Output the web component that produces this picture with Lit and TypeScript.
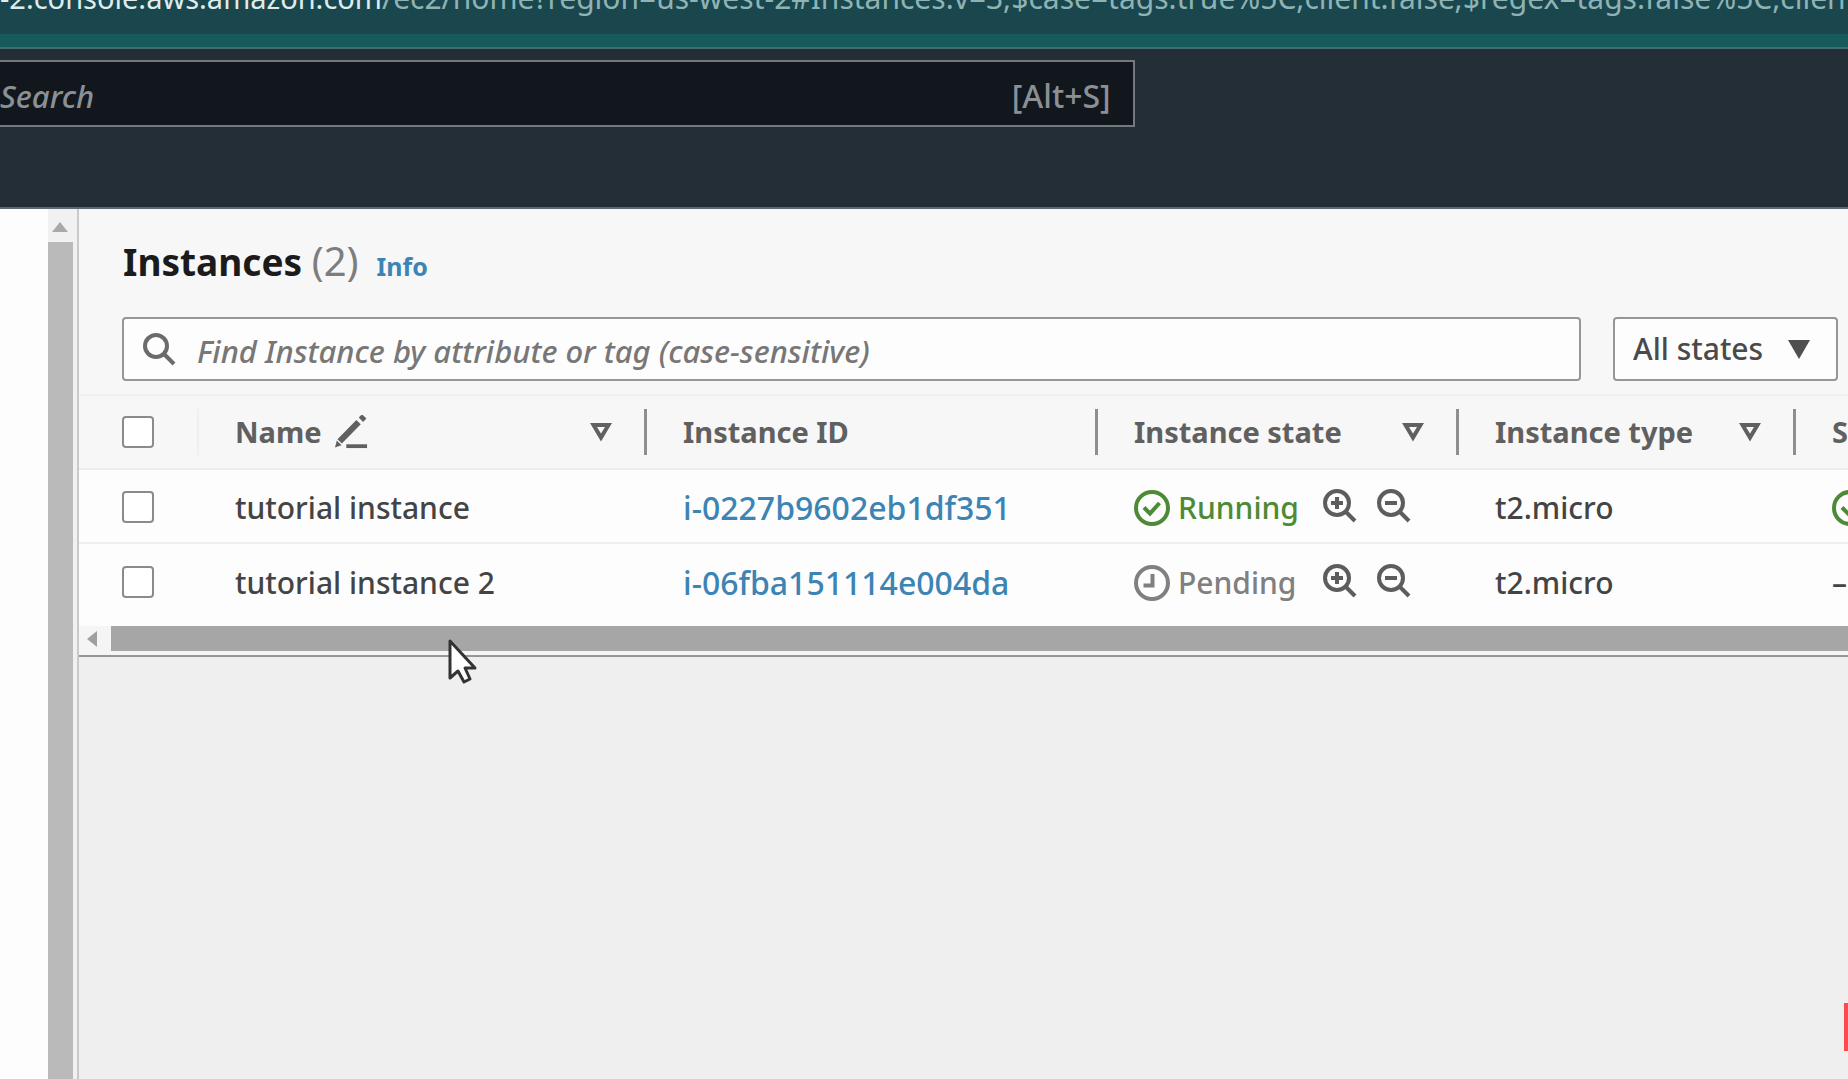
import { LitElement, html, css, svg } from "lit";
import { customElement } from "lit/decorators.js";

type Instance = { name: string; id: string; state: "Running" | "Pending"; type: string; check: boolean };

const INSTANCES: Instance[] = [
  { name: "tutorial instance", id: "i-0227b9602eb1df351", state: "Running", type: "t2.micro", check: true },
  { name: "tutorial instance 2", id: "i-06fba151114e004da", state: "Pending", type: "t2.micro", check: false },
];

const icon = (cls: string, size: number, body: unknown) => html`<svg
  class="icon ${cls}" width=${size} height=${size} viewBox="0 0 36 36" fill="none"
  stroke="currentColor" stroke-width="4" aria-hidden="true">${body}</svg>`;

const search = () => icon("lens", 36, svg`<circle cx="15" cy="15" r="11"/><path d="M23 23 L33 33"/>`);
const zoomIn = () => icon("", 36, svg`<circle cx="15" cy="15" r="12"/><path d="M24 24 L33 33"/><path d="M9 15H21M15 9V21"/>`);
const zoomOut = () => icon("", 36, svg`<circle cx="15" cy="15" r="12"/><path d="M24 24 L33 33"/><path d="M9 15H21"/>`);
const running = () => icon("", 36, svg`<circle cx="18" cy="18" r="16"/><path d="M10 17.5 L16 23.500 L25.500 13"/>`);
const pending = () => icon("", 36, svg`<circle cx="18" cy="18" r="16"/><path d="M18.500 9V20.500H9.500"/>`);
const pencil = () => icon("", 34, svg`<path d="M6 28 L26 7.500" stroke-width="6.500"/><path d="M28.500 5 L32 1.500" stroke-width="6.500"/><path d="M1 34.500 L3 27 L8 32 Z" fill="currentColor" stroke="none"/><path d="M13 33H35"/>`);
const sortMark = () => html`<svg class="icon" width="22" height="20" viewBox="0 0 22 20" fill="none"
  stroke="currentColor" stroke-width="4" aria-hidden="true"><path d="M3.500 3H18.500L11 15.500Z"/></svg>`;

@customElement("app-root")
export class AppRoot extends LitElement {
  static styles = css`
    :host {
      display: flex;
      flex-direction: column;
      min-height: 100vh;
      position: relative;
      overflow: hidden;
      background: #efefef;
      color: #444;
      font: 500 30px/36px "Noto Sans", "Open Sans", sans-serif;
    }
    * { box-sizing: border-box; }
    button, input, select { font: inherit; color: inherit; margin: 0; }
    button { background: none; border: 0; padding: 0; display: flex; }
    a { color: #3c84b4; text-decoration: none; }
    .icon { display: block; flex: none; }

    .address {
      display: flex;
      align-items: flex-end;
      height: 34px;
      padding-bottom: 18px;
      overflow: hidden;
      white-space: nowrap;
      background: #1a474d;
      color: #8fb3b5;
      font-weight: 400;
    }
    .address b { color: #dfecec; font-weight: 400; font-size: 29px; }
    .chrome-edge { height: 15px; background: #165a5e; border-bottom: 2px solid #456b72; }

    .nav { height: 160px; padding-top: 11px; background: #232e37; border-bottom: 2px solid #5f686f; }
    .nav-search {
      display: flex;
      align-items: center;
      width: 61.4%;
      height: 67px;
      padding: 4px 22px 0 0;
      background: #12171e;
      border: 2px solid #737980;
      border-left: 0;
      color: #8b9095;
      font-size: 32px;
    }
    .nav-search input { flex: 1; min-width: 0; border: 0; padding: 0; background: none; outline: 0; font-size: 31px; line-height: 44px; }
    input::placeholder { color: inherit; opacity: 1; font-style: italic; }

    .body { flex: 1; display: flex; }
    .side { width: 48px; background: #fdfdfd; }
    .vscroll {
      width: 31px;
      display: flex;
      flex-direction: column;
      background: #f1f1f1;
      border-right: 2px solid #c9c9c9;
    }
    .vscroll svg { margin: 13px 0 10px 4px; display: block; flex: none; }
    .vthumb { flex: 1; width: 25px; background: #bababa; }

    main { flex: 1; min-width: 0; }
    .panel { background: #f7f7f7; border-bottom: 2px solid #969696; }
    .title { display: flex; align-items: baseline; height: 108px; padding: 26px 44px 0; }
    h1 { margin: 0; font-size: 37px; line-height: 52px; color: #1b1b1b; font-weight: 700; }
    h1 span { font-size: 40px; font-weight: 400; color: #7d7d7d; }
    .info { margin-left: 18px; font-size: 25px; font-weight: 700; }

    .filters { display: flex; gap: 32px; padding: 0 10px 13px 43px; }
    .find, .states {
      display: flex;
      align-items: center;
      height: 64px;
      background: #fdfdfd;
      border: 2px solid #969696;
      border-radius: 4px;
    }
    .find { flex: 1; padding: 0 20px 0 17px; gap: 20px; color: #777; font-size: 31px; }
    .find input { flex: 1; min-width: 0; height: 60px; border: 0; padding: 4px 0 0; background: none; outline: 0; line-height: 44px; }
    .find .lens { color: #6b6b6b; }
    .states { position: relative; width: 225px; color: #4a4a4a; }
    .states select { width: 100%; height: 100%; padding: 0 0 0 18px; border: 0; background: none; appearance: none; outline: 0; }
    .states svg { position: absolute; right: 26px; top: 21px; pointer-events: none; }

    .scroller { overflow: hidden; border-top: 2px solid #efefef; }
    table { width: 2100px; table-layout: fixed; border-collapse: separate; border-spacing: 0; }
    .c-pick { width: 120px; }
    .c-name { width: 448px; }
    .c-id { width: 451px; }
    .c-state { width: 361px; }
    .c-type { width: 337px; }
    th, td { padding: 0 0 0 36px; text-align: left; vertical-align: middle; font-weight: inherit; white-space: nowrap; }
    th { height: 74px; border-bottom: 2px solid #ececec; color: #606060; font-weight: 700; font-size: 29px; }
    td { height: 74px; padding-top: 4px; background: #fdfdfd; border-bottom: 2px solid #efefef; }
    tr:last-child td { height: 82px; padding-bottom: 8px; border-bottom: 0; }
    td a { font-size: 32px; }
    .pick { padding-left: 43px; }
    td.pick { padding-top: 2px; }
    .head { display: flex; align-items: center; height: 46px; padding-right: 32px; border-right: 3px solid #8e8e8e; }
    .head.light { border-right: 2px solid #efefef; }
    .head .sort { margin-left: auto; }
    .head .edit { margin-left: 12px; }
    .box {
      display: block;
      appearance: none;
      width: 32px;
      height: 32px;
      background: #fff;
      border: 2px solid #8b8b8b;
      border-radius: 4px;
    }
    .state { display: flex; align-items: center; color: #808080; }
    .state .label { margin: 0 26px 0 8px; width: 118px; }
    .state.running, .ok { color: #4d8a35; }
    .state button { color: #5d5d5d; margin-right: 18px; padding-bottom: 4px; }

    .hscroll { display: flex; align-items: center; height: 29px; padding: 0 0 4px 8px; background: #f5f5f5; }
    .hthumb { flex: 1; height: 25px; margin-left: 14px; background: #a6a6a6; }

    .pointer { position: absolute; left: 447px; top: 637px; }
    .tab { position: absolute; right: 0; top: 1003px; width: 4px; height: 48px; background: #ff4a4d; }
  `;

  private heading(label: string, sortable = true, extra: unknown = "") {
    return html`<th scope="col"><div class="head"><span>${label}</span>${extra}
      ${sortable ? html`<button class="sort" aria-label="Sort by ${label}">${sortMark()}</button>` : ""}</div></th>`;
  }

  private row(i: Instance) {
    return html`<tr>
      <td class="pick"><input class="box" type="checkbox" aria-label="Select ${i.name}"></td>
      <td>${i.name}</td>
      <td><a href="#${i.id}">${i.id}</a></td>
      <td><div class="state ${i.state.toLowerCase()}">
        ${i.state === "Running" ? running() : pending()}<span class="label">${i.state}</span>
        <button aria-label="Include ${i.state}">${zoomIn()}</button>
        <button aria-label="Exclude ${i.state}">${zoomOut()}</button>
      </div></td>
      <td>${i.type}</td>
      <td>${i.check ? html`<span class="ok">${running()}</span>` : "–"}</td>
    </tr>`;
  }

  render() {
    return html`
      <div class="address"><b>-2.console.aws.amazon.com</b><span>/ec2/home?region=us-west-2#Instances:v=3;$case=tags:true%5C,client:false;$regex=tags:false%5C,client:false</span></div>
      <div class="chrome-edge"></div>
      <header class="nav">
        <label class="nav-search"><input type="search" placeholder="Search" aria-label="Search"><span>[Alt+S]</span></label>
      </header>
      <div class="body">
        <aside class="side"></aside>
        <div class="vscroll">
          <svg width="16" height="10" viewBox="0 0 16 10" fill="#a9a9a9" aria-hidden="true"><path d="M8 0L16 10H0Z"/></svg>
          <div class="vthumb"></div>
        </div>
        <main>
          <section class="panel">
            <div class="title"><h1>Instances <span>(2)</span></h1><a class="info" href="#info">Info</a></div>
            <div class="filters">
              <label class="find">${search()}<input type="text" aria-label="Find instance"
                placeholder="Find Instance by attribute or tag (case-sensitive)"></label>
              <label class="states"><select aria-label="Instance state filter"><option>All states</option></select>
                <svg width="22" height="19" viewBox="0 0 22 19" fill="#4f4f4f" aria-hidden="true"><path d="M0 0H22L11 19Z"/></svg></label>
            </div>
            <div class="scroller">
              <table>
                <colgroup><col class="c-pick"><col class="c-name"><col class="c-id"><col class="c-state"><col class="c-type"><col></colgroup>
                <thead><tr>
                  <th class="pick"><div class="head light"><input class="box" type="checkbox" aria-label="Select all"></div></th>
                  ${this.heading("Name", true, html`<span class="edit">${pencil()}</span>`)}
                  ${this.heading("Instance ID", false)}
                  ${this.heading("Instance state")}
                  ${this.heading("Instance type")}
                  ${this.heading("Status check")}
                </tr></thead>
                <tbody>${INSTANCES.map((i) => this.row(i))}</tbody>
              </table>
            </div>
            <div class="hscroll">
              <svg width="10" height="16" viewBox="0 0 10 16" fill="#a0a0a0" aria-hidden="true"><path d="M0 8L10 0V16Z"/></svg>
              <div class="hthumb"></div>
            </div>
          </section>
        </main>
      </div>
      <svg class="pointer" width="30" height="48" viewBox="0 0 30 48" fill="#fff" stroke="#333" stroke-width="3" stroke-linejoin="round" aria-hidden="true">
        <path d="M3 4V41L11 34L17 45L23 42L18 31H28Z"/></svg>
      <div class="tab"></div>
    `;
  }
}
